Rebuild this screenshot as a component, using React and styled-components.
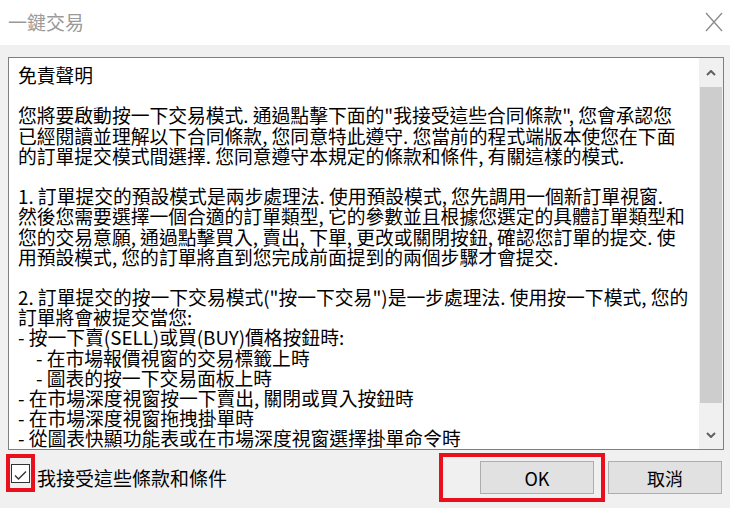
import React from 'react';
import styled, { createGlobalStyle } from 'styled-components';

const GlobalStyle = createGlobalStyle`
  body {
    margin: 0;
    background: #f0f0f0;
    font-family: "Noto Sans CJK TC", "Noto Sans", sans-serif;
  }
`;

const lines = [
  { text: '免責聲明' },
  { text: '' },
  { text: '您將要啟動按一下交易模式. 通過點擊下面的"我接受這些合同條款", 您會承認您' },
  { text: '已經閱讀並理解以下合同條款, 您同意特此遵守. 您當前的程式端版本使您在下面' },
  { text: '的訂單提交模式間選擇. 您同意遵守本規定的條款和條件, 有關這樣的模式.' },
  { text: '' },
  { text: '1. 訂單提交的預設模式是兩步處理法. 使用預設模式, 您先調用一個新訂單視窗.' },
  { text: '然後您需要選擇一個合適的訂單類型, 它的參數並且根據您選定的具體訂單類型和' },
  { text: '您的交易意願, 通過點擊買入, 賣出, 下單, 更改或關閉按鈕, 確認您訂單的提交. 使' },
  { text: '用預設模式, 您的訂單將直到您完成前面提到的兩個步驟才會提交.' },
  { text: '' },
  { text: '2. 訂單提交的按一下交易模式("按一下交易")是一步處理法. 使用按一下模式, 您的' },
  { text: '訂單將會被提交當您:' },
  { text: '- 按一下賣(SELL)或買(BUY)價格按鈕時:' },
  { text: '- 在市場報價視窗的交易標籤上時', indent: 1 },
  { text: '- 圖表的按一下交易面板上時', indent: 1 },
  { text: '- 在市場深度視窗按一下賣出, 關閉或買入按鈕時' },
  { text: '- 在市場深度視窗拖拽掛單時' },
  { text: '- 從圖表快顯功能表或在市場深度視窗選擇掛單命令時' },
];

export default function App() {
  return (
    <>
      <GlobalStyle />
      <Window>
        <TitleBar>
          <Title>一鍵交易</Title>
          <CloseIcon width="18" height="20" viewBox="0 0 18 20">
            <path d="M1 1 L17 19 M17 1 L1 19" />
          </CloseIcon>
        </TitleBar>

        <Body>
          <TextBox>
            <Content>
              {lines.map((line, i) => (
                <Line key={i} $indent={line.indent}>{line.text}</Line>
              ))}
            </Content>
            <Scrollbar>
              <ArrowButton>
                <Chevron viewBox="0 0 10 6">
                  <path d="M1 5 L5 1 L9 5" />
                </Chevron>
              </ArrowButton>
              <Track>
                <Thumb />
              </Track>
              <ArrowButton>
                <Chevron viewBox="0 0 10 6">
                  <path d="M1 1 L5 5 L9 1" />
                </Chevron>
              </ArrowButton>
            </Scrollbar>
          </TextBox>
        </Body>

        <Footer>
          <Accept>
            <Checkbox>
              <svg width="17" height="17" viewBox="0 0 17 17">
                <path d="M3 8.5 L6.5 12 L14 4.5" />
              </svg>
              <Highlight $top={-11} $left={-6} $right={-6} $bottom={-10} />
            </Checkbox>
            <AcceptText>我接受這些條款和條件</AcceptText>
          </Accept>
          <Buttons>
            <Button>
              OK
              <Highlight $top={-9} $left={-42} $right={-12} $bottom={-9} />
            </Button>
            <Button>取消</Button>
          </Buttons>
        </Footer>
      </Window>
    </>
  );
}

const Window = styled.div`
  width: 730px;
  height: 508px;
  display: flex;
  flex-direction: column;
  background: #f0f0f0;
  overflow: hidden;
`;

const TitleBar = styled.div`
  height: 45px;
  flex-shrink: 0;
  display: flex;
  align-items: center;
  justify-content: space-between;
  padding: 0 7px 0 8px;
  background: #fff;
`;

const Title = styled.div`
  font-size: 19px;
  color: #9a9a9a;
  margin-top: -3px;
`;

const CloseIcon = styled.svg`
  margin-top: -2px;
  path {
    stroke: #8a8a8a;
    stroke-width: 1.3;
    fill: none;
  }
`;

const Body = styled.div`
  padding: 12px 6px 0 8px;
`;

const TextBox = styled.div`
  height: 393px;
  box-sizing: border-box;
  display: flex;
  background: #fff;
  border: 1px solid #7f7f7f;
`;

const Content = styled.div`
  flex: 1;
  padding: 7px 0 0 9px;
  font-size: 18.8px;
  line-height: 20.2px;
  color: #000;
`;

const Line = styled.div`
  height: 20.2px;
  white-space: pre;
  padding-left: ${(p) => (p.$indent ? 18 * p.$indent : 0)}px;
`;

const Scrollbar = styled.div`
  width: 24px;
  display: flex;
  flex-direction: column;
  background: #f0f0f0;
`;

const ArrowButton = styled.div`
  height: 29px;
  display: flex;
  align-items: center;
  justify-content: center;
`;

const Chevron = styled.svg`
  width: 10px;
  height: 6px;
  path {
    stroke: #606060;
    stroke-width: 2;
    fill: none;
  }
`;

const Track = styled.div`
  flex: 1;
  padding: 0 1px;
`;

const Thumb = styled.div`
  height: 316px;
  background: #cdcdcd;
`;

const Footer = styled.div`
  flex: 1;
  display: flex;
  align-items: flex-start;
  padding: 11px 8px 0 11px;
`;

const Accept = styled.label`
  height: 33px;
  display: flex;
  align-items: center;
  gap: 7px;
`;

const Checkbox = styled.div`
  position: relative;
  width: 19px;
  height: 19px;
  box-sizing: border-box;
  margin-bottom: 9px;
  border: 1px solid #333;
  background: #fff;
  svg path {
    stroke: #333;
    stroke-width: 1.4;
    fill: none;
  }
`;

const AcceptText = styled.span`
  font-size: 19px;
  color: #000;
`;

const Buttons = styled.div`
  margin-left: auto;
  display: flex;
  gap: 14px;
`;

const Button = styled.button`
  position: relative;
  width: 114px;
  height: 33px;
  padding: 0;
  background: #e1e1e1;
  border: 1px solid #adadad;
  font-family: "Noto Sans CJK TC", "Noto Sans", sans-serif;
  font-size: 18px;
  color: #000;
`;

const Highlight = styled.span`
  position: absolute;
  top: ${(p) => p.$top}px;
  left: ${(p) => p.$left}px;
  right: ${(p) => p.$right}px;
  bottom: ${(p) => p.$bottom}px;
  border: 4px solid #e8101c;
  pointer-events: none;
`;
